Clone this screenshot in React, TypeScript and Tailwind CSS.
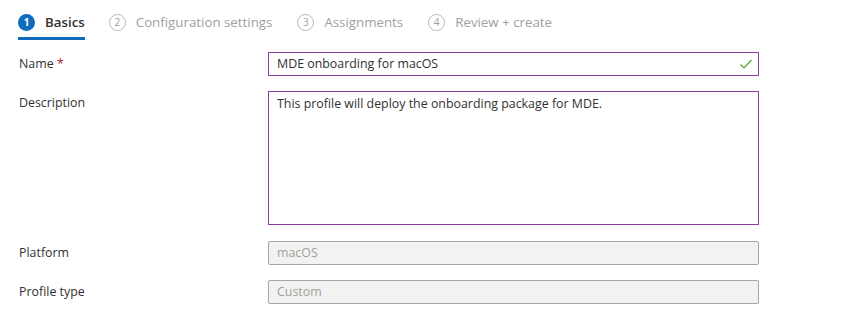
import React from "react";

const steps = [
    { n: 1, label: "Basics", active: true },
    { n: 2, label: "Configuration settings", active: false },
    { n: 3, label: "Assignments", active: false },
    { n: 4, label: "Review + create", active: false },
];

const Step = ({ n, label, active }: { n: number; label: string; active: boolean }) => (
    <div className={`flex items-center h-[40px] mr-[24px] ${active ? "border-b-[3px] border-[#0f6cbd] pt-[8px] mr-[23px]" : "pt-[5px] mr-[25px]"}`}>
        {active ? (
            <span className="w-[17px] h-[17px] rounded-full bg-[#0f6cbd] text-white text-[10px] font-bold flex items-center justify-center">{n}</span>
        ) : (
            <span className="w-[17px] h-[17px] rounded-full border border-[#b8b8b8] text-[#a0a0a0] text-[10px] flex items-center justify-center">{n}</span>
        )}
        <span className={`ml-[10px] text-[13.3px] ${active ? "text-[#323130] font-semibold" : "text-[#a19f9d]"}`}>{label}</span>
    </div>
);

export default function App() {
    return (
        <div className="w-[846px] h-[334px] bg-white pl-[18px] text-[12.4px] text-[#323130]" style={{ fontFamily: '"Open Sans", "Noto Sans", sans-serif' }}>
            <div className="flex items-start h-[40px]">
                {steps.map((s) => (
                    <Step key={s.n} {...s} />
                ))}
            </div>

            <div className="flex flex-col gap-[15px] mt-[12px] pl-[1px]">
                <div className="flex items-center">
                    <div className="w-[249px]">
                        Name <span className="text-[#a4262c]">*</span>
                    </div>
                    <div className="w-[491px] h-[24px] border border-[#8a3d9e] flex items-center justify-between pl-[8px] pr-[5px]">
                        <span>MDE onboarding for macOS</span>
                        <svg width="14" height="14" viewBox="0 0 14 14" fill="none">
                            <path d="M1.5 7.5 L5 11 L12.5 3" stroke="#5c9e31" strokeWidth="1.2" />
                        </svg>
                    </div>
                </div>

                <div className="flex items-start">
                    <div className="w-[249px] pt-[3px]">Description</div>
                    <div className="w-[491px] h-[134px] border border-[#8a3d9e] px-[8px] pt-[3px]">
                        This profile will deploy the onboarding package for MDE.
                    </div>
                </div>

                <div className="flex items-center mt-[1px]">
                    <div className="w-[249px]">Platform</div>
                    <div className="w-[491px] h-[24px] border border-[#a6a6a6] rounded-[2px] bg-[#f3f2f1] text-[#a19f9d] flex items-center pl-[8px]">
                        macOS
                    </div>
                </div>

                <div className="flex items-center">
                    <div className="w-[249px]">Profile type</div>
                    <div className="w-[491px] h-[24px] border border-[#a6a6a6] rounded-[2px] bg-[#f3f2f1] text-[#a19f9d] flex items-center pl-[8px]">
                        Custom
                    </div>
                </div>
            </div>
        </div>
    );
}
